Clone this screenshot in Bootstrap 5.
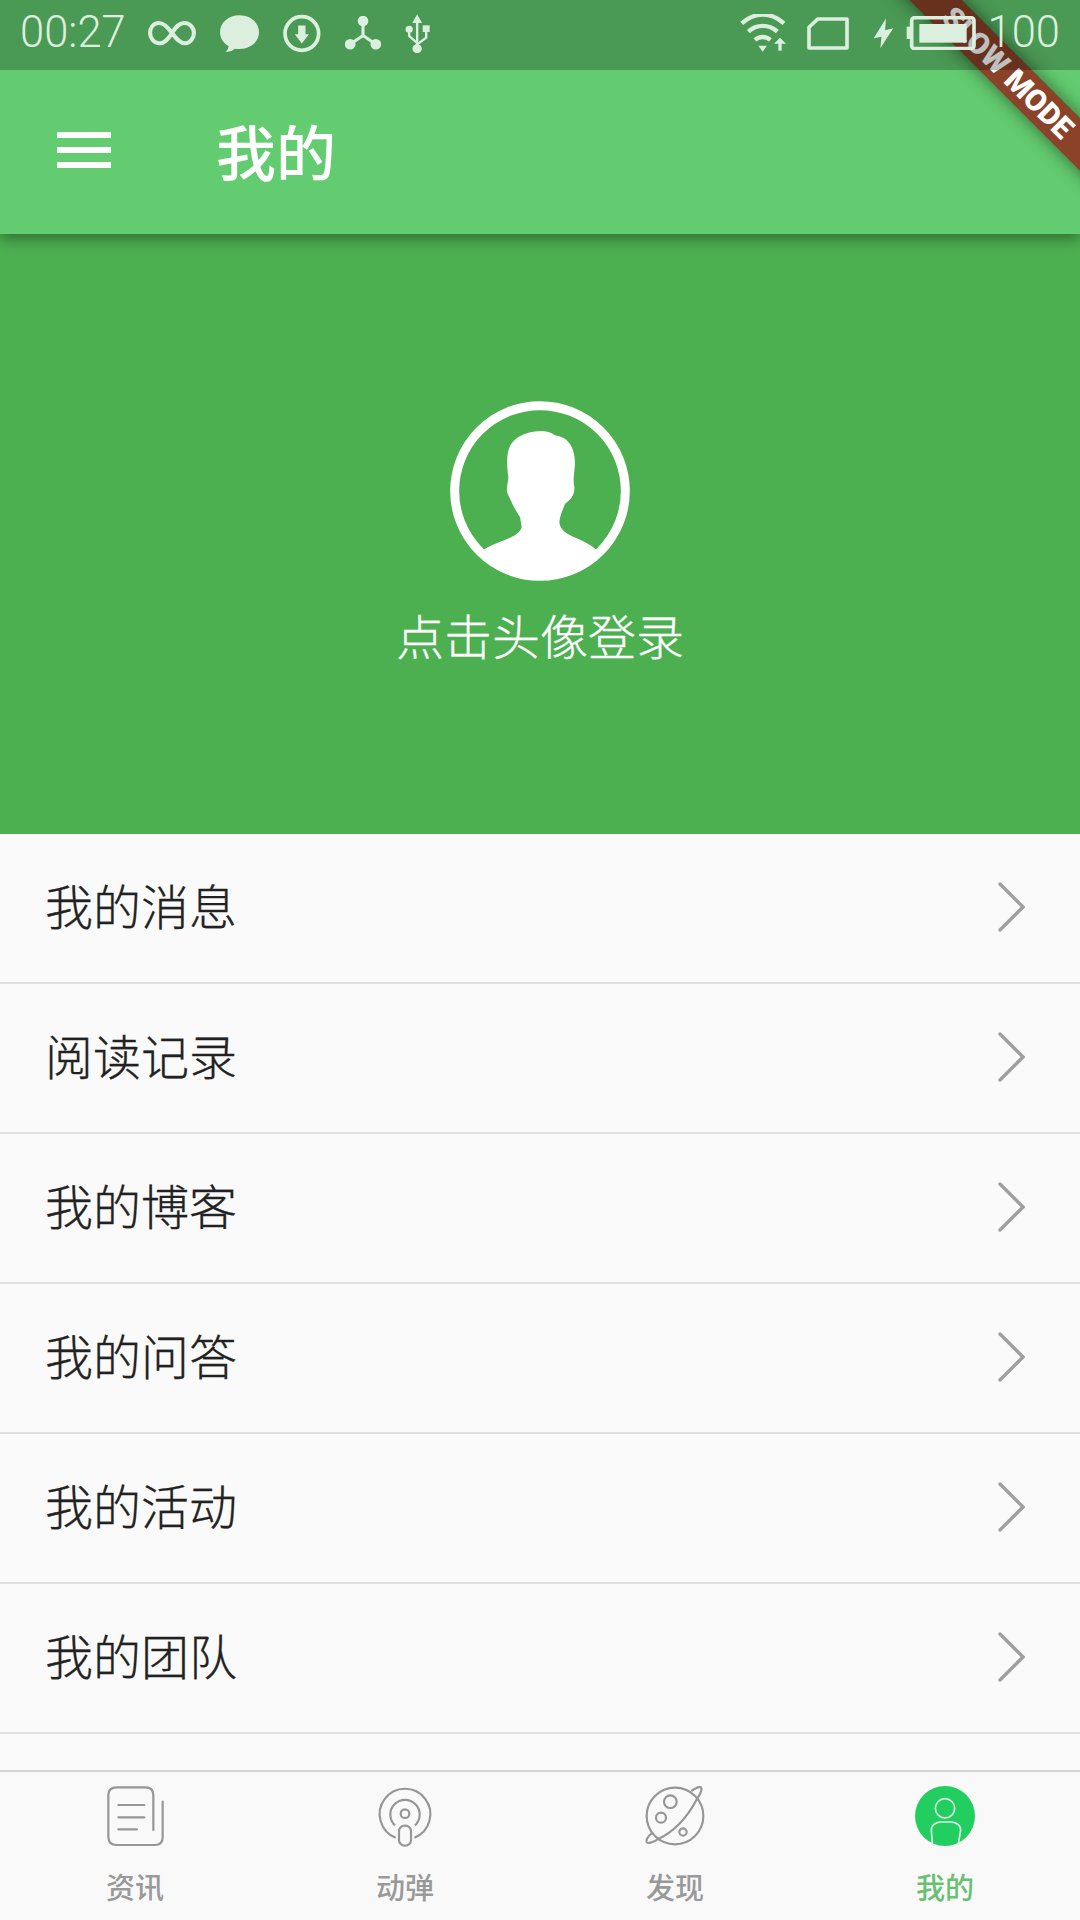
<!DOCTYPE html>
<html lang="zh">
<head>
    <meta charset="UTF-8">
    <meta name="viewport" content="width=device-width, initial-scale=1.0">
    <title>我的</title>
    <link href="https://cdn.jsdelivr.net/npm/bootstrap@5.3.0/dist/css/bootstrap.min.css" rel="stylesheet">
    <script src="https://cdn.jsdelivr.net/npm/bootstrap@5.3.0/dist/js/bootstrap.bundle.min.js"></script>
    <style>
        body {
            background-color: #fafafa;
            font-family: "Noto Sans CJK SC", sans-serif;
        }
        .phone-page {
            position: relative;
            width: 1080px;
            height: 1920px;
            overflow: hidden;
        }
        .app-head {
            position: relative;
            height: 234px;
            flex: none;
            background-color: #63cc70;
            box-shadow: 0 4px 14px rgba(0,0,0,0.4);
        }
        .status-strip {
            position: relative;
            z-index: 2;
            height: 70px;
            padding: 0 20px 4px 20px;
            background-color: rgba(0,0,0,0.25);
            color: #dcefdf;
            font-family: Roboto, sans-serif;
            font-size: 43.5px;
            font-weight: 300;
            line-height: 1;
        }
        .status-group {
            gap: 24px;
        }
        .status-group svg {
            display: block;
            flex: none;
            fill: #dcefdf;
            stroke: #dcefdf;
        }
        .status-right {
            gap: 12px;
        }
        .time-text {
            margin-right: -2px;
        }
        .title-bar {
            height: 164px;
            padding-left: 57px;
            padding-bottom: 4px;
        }
        .menu-lines {
            width: 54px;
            height: 36px;
            margin-right: 105px;
            border-top: 6px solid #fff;
            border-bottom: 6px solid #fff;
        }
        .menu-lines::before {
            content: "";
            display: block;
            height: 6px;
            margin-top: 9px;
            background-color: #fff;
        }
        .page-title {
            color: #fff;
            font-size: 60px;
            font-weight: 500;
            line-height: 1;
        }
        .slow-ribbon {
            position: absolute;
            z-index: 1;
            top: 54px;
            left: 808px;
            width: 400px;
            height: 37px;
            transform: rotate(45deg);
            background-color: #8a4229;
            box-shadow: 0 0 18px rgba(0,0,0,0.5);
            color: #fff;
            font-family: Roboto, sans-serif;
            font-size: 30px;
            font-weight: 900;
            line-height: 37px;
            text-align: center;
        }
        .login-hero {
            height: 600px;
            flex: none;
            padding-top: 167px;
            background-color: #4caf50;
            color: #fff;
        }
        .avatar-svg {
            display: block;
        }
        .login-text {
            margin-top: 21px;
            font-size: 48px;
            font-weight: 300;
            -webkit-text-stroke: 0.3px #fff;
            line-height: 64px;
        }
        .menu-wrap {
            flex: 1 1 0;
            min-height: 0;
            overflow: hidden;
        }
        .menu-wrap .list-group-item {
            height: 150px;
            padding: 0 55px 2px 45px;
            background-color: #fafafa;
            border-color: #e0e0e0;
            border-width: 0 0 2px;
            color: #222;
            font-size: 48px;
            font-weight: 300;
            -webkit-text-stroke: 0.3px #222;
        }
        .menu-label {
            margin-top: -7px;
        }
        .tab-strip {
            height: 150px;
            flex: none;
            background-color: #f9f9f9;
            border-top: 2px solid #d4d4d4;
        }
        .tab-item {
            padding-top: 13px;
            color: #999;
            font-size: 29px;
            font-weight: 500;
            line-height: 40px;
        }
        .tab-item svg {
            display: block;
            margin: 0 auto 19px;
            fill: none;
            stroke: #969696;
            stroke-width: 6.5;
        }
        .tab-active {
            color: #69bf72;
        }
    </style>
</head>
<body>
    <div class="phone-page d-flex flex-column">
        <div class="app-head">
            <div class="status-strip d-flex align-items-center justify-content-between">
                <div class="status-group d-flex align-items-center">
                    <span class="time-text">00:27</span>
                    <svg width="48" height="25" viewBox="430 65 140 75" preserveAspectRatio="none" style="fill:none" stroke-width="12"><path d="M500 101C485 80 475 71 462 71C445 71 436 86 436 101C436 116 447 132 464 132C478 132 487 122 500 101C513 80 522 71 536 71C553 71 564 86 564 101C564 116 553 132 538 132C525 132 515 122 500 101Z"/></svg>
                    <svg width="39" height="37" viewBox="638 44 114 110" preserveAspectRatio="none" stroke-width="0"><path d="M695 45C727 45 752 67 752 95C752 123 727 145 695 145C690 145 685 145 681 144C675 150 665 154 654 153C660 148 663 142 663 136C648 128 638 112 638 95C638 67 663 45 695 45Z"/></svg>
                    <svg width="38" height="39" viewBox="822 40 111 116" stroke-width="0"><circle cx="877" cy="98" r="50" fill="none" stroke-width="11"/><path d="M866 74H888V100H898L877 128L856 100H866Z"/></svg>
                    <svg width="36" height="35" viewBox="1002 47 104 104" preserveAspectRatio="none" stroke-width="9"><path d="M1054 62V105L1017 131M1054 105L1091 131" fill="none"/><circle cx="1054" cy="62" r="11"/><circle cx="1017" cy="131" r="11"/><circle cx="1091" cy="131" r="11"/></svg>
                    <svg width="25" height="39" viewBox="1175 41 72 117" preserveAspectRatio="none" stroke-width="7"><path d="M1210 68V145M1187 92V107L1210 128M1236 92V112L1210 132" fill="none"/><path d="M1210 42L1224 68H1196Z" stroke-width="0"/><circle cx="1187" cy="87" r="7"/><rect x="1226" y="75" width="20" height="20" stroke-width="0"/><circle cx="1210" cy="145" r="10"/></svg>
                </div>
                <div class="status-group status-right d-flex align-items-center">
                    <svg class="me-2" width="47" height="38" viewBox="120 42 141 114" style="fill:none" stroke-width="13"><path d="M125 70C165 35 212 35 252 70M145 95C170 72 207 72 232 95M165 120C178 108 198 108 211 120"/><path d="M175 137H201L188 155Z" fill="#dcefdf" stroke-width="0"/><path d="M240 152V128" stroke-width="10"/><path d="M222 131L240 113L258 131Z" fill="#dcefdf" stroke-width="0"/></svg>
                    <svg class="me-2" width="42" height="33" viewBox="325 50 127 98" style="fill:none" stroke-width="11" stroke-linejoin="round"><path d="M358 55H446V143H331V80Z"/></svg>
                    <svg class="ms-1" width="21" height="31" viewBox="525 57 57 84" stroke-width="0"><path d="M560 58L527 112L548 108L545 139L580 85L558 90Z"/></svg>
                    <svg width="70" height="34" viewBox="620 48 210 102" stroke-width="11"><path d="M622 80H632V117H622Z" stroke-width="0"/><rect x="637" y="53" width="187" height="93" rx="9" fill="none"/><rect x="660" y="72" width="142" height="56" stroke-width="0"/></svg>
                    <span>100</span>
                </div>
            </div>
            <div class="title-bar d-flex align-items-center">
                <div class="menu-lines"></div>
                <div class="page-title">我的</div>
            </div>
        </div>
        <div class="slow-ribbon"><span>SLOW MODE</span></div>

        <div class="login-hero d-flex flex-column align-items-center">
            <svg class="avatar-svg" width="180" height="180" viewBox="210 62 540 540">
                <circle cx="480" cy="332" r="256" fill="none" stroke="#fff" stroke-width="27"/>
                <path fill="#fff" d="M315 505C360 480 420 470 425 440L420 410C400 380 395 365 385 345C375 325 385 310 385 290C375 220 385 190 415 170C450 150 500 145 525 165C560 170 585 195 585 250C583 280 578 300 583 320C585 345 570 360 555 370C548 390 540 405 538 425C540 455 570 465 600 478C620 487 635 495 648 508L660 520A256 256 0 0 1 300 520Z"/>
            </svg>
            <div class="login-text">点击头像登录</div>
        </div>

        <div class="menu-wrap">
            <div class="list-group list-group-flush" id="menu-list"></div>
        </div>

        <div class="tab-strip row g-0">
            <div class="tab-item col-3 text-center">
                <svg width="60" height="62" viewBox="300 195 180 186" stroke-linecap="round"><path d="M445 330V225Q445 202 422 202H335Q310 202 310 225V350Q310 375 335 375H450Q473 375 473 350V245M340 255H418M340 292H418M340 328H396"/></svg>
                <div>资讯</div>
            </div>
            <div class="tab-item col-3 text-center">
                <svg width="60" height="62" viewBox="1085 195 180 186"><path d="M1147 353A76 76 0 1 1 1203 353M1145 316A44 44 0 1 1 1205 316"/><circle cx="1175" cy="281" r="13"/><rect x="1157" y="317" width="36" height="60" rx="17"/></svg>
                <div>动弹</div>
            </div>
            <div class="tab-item col-3 text-center">
                <svg width="60" height="62" viewBox="302 195 180 186"><circle cx="392" cy="288" r="85"/><path d="M441 213C455 203 470 197 471 204C473 212 466 225 458 237C430 290 390 335 340 358C325 368 309 372 307 366C305 358 313 347 325 338"/><circle cx="378" cy="245" r="19"/><circle cx="350" cy="293" r="15"/><circle cx="416" cy="336" r="11"/></svg>
                <div>发现</div>
            </div>
            <div class="tab-item tab-active col-3 text-center">
                <svg width="60" height="62" viewBox="1085 195 180 186">
                    <circle cx="1175" cy="288" r="90" fill="#22ce60" stroke="none"/>
                    <circle cx="1175" cy="265" r="29" stroke="#d8f5e2" stroke-width="5"/>
                    <path d="M1137 372L1134 330Q1134 310 1160 306H1195Q1222 310 1222 330L1215 372" stroke="#d8f5e2" stroke-width="5"/>
                </svg>
                <div>我的</div>
            </div>
        </div>
    </div>

    <script>
        const menu_items = ['我的消息', '阅读记录', '我的博客', '我的问答', '我的活动', '我的团队', ''];
        const arrow_svg = '<svg width="27" height="50" viewBox="0 0 27 50" fill="none" stroke="#a0a0a0" stroke-width="3.4" stroke-linecap="round"><path d="M2 2L25 25L2 48"/></svg>';

        const list = document.getElementById('menu-list');
        menu_items.forEach(name => {
            const row = document.createElement('div');
            row.className = 'list-group-item d-flex align-items-center justify-content-between';
            row.innerHTML = `<span class="menu-label">${name}</span>` + (name ? arrow_svg : '');
            list.appendChild(row);
        });
    </script>
</body>
</html>
